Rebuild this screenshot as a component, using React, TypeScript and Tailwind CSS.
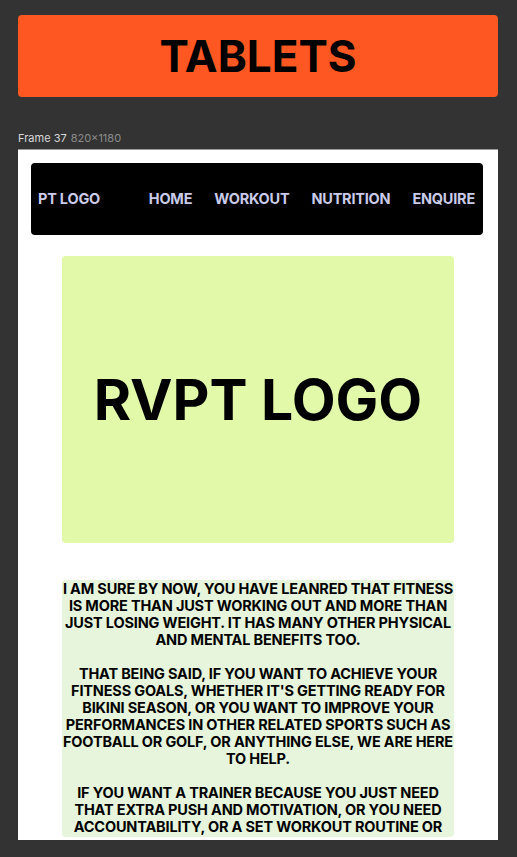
const paragraphs = [
  [
    "I AM SURE BY NOW, YOU HAVE LEANRED THAT FITNESS",
    "IS MORE THAN JUST WORKING OUT AND MORE THAN",
    "JUST LOSING WEIGHT. IT HAS MANY OTHER PHYSICAL",
    "AND MENTAL BENEFITS TOO.",
  ],
  [
    "THAT BEING SAID, IF YOU WANT TO ACHIEVE YOUR",
    "FITNESS GOALS, WHETHER IT'S GETTING READY FOR",
    "BIKINI SEASON, OR YOU WANT TO IMPROVE YOUR",
    "PERFORMANCES IN OTHER RELATED SPORTS SUCH AS",
    "FOOTBALL OR GOLF, OR ANYTHING ELSE, WE ARE HERE",
    "TO HELP.",
  ],
  [
    "IF YOU WANT A TRAINER BECAUSE YOU JUST NEED",
    "THAT EXTRA PUSH AND MOTIVATION, OR YOU NEED",
    "ACCOUNTABILITY, OR A SET WORKOUT ROUTINE OR",
    "PERSONALISED NUTRITION PLAN, WE CAN DO THAT TOO.",
  ],
];

const navLinks = ["HOME", "WORKOUT", "NUTRITION", "ENQUIRE"];

export default function App() {
  return (
    <div className="h-[857px] w-[517px] overflow-hidden bg-[#333333] pl-[18px] pr-[19px] pt-[15px] font-['Inter',sans-serif]">
      {/* Section heading */}
      <div className="flex h-[82px] items-center justify-center rounded-[4px] bg-[#ff5722]">
        <h1 className="text-[44px] font-bold leading-none text-black">TABLETS</h1>
      </div>

      {/* Frame label */}
      <div className="mt-[35px] flex h-[17px] items-start gap-1 text-[11px] leading-[12px]">
        <span className="text-[#d9d9d9]">Frame 37</span>
        <span className="text-[#8c8c8c]">820×1180</span>
      </div>

      {/* Frame */}
      <div className="h-[691px] overflow-hidden border-t border-[#9a9a9a] bg-white pl-[13px] pr-[15px] pt-[13px]">
        <nav className="flex h-[72px] items-center rounded-[4px] bg-black pl-[7px] pr-[8px] text-[14.5px] font-bold tracking-[-0.015em] text-[#c9cbe8]">
          <span>PT LOGO</span>
          <div className="ml-auto flex items-center gap-[22px]">
            {navLinks.map((link) => (
              <a key={link} href="#" className="leading-none">
                {link}
              </a>
            ))}
          </div>
        </nav>

        <div className="ml-[31px] mr-[29px] mt-[21px] flex h-[287px] items-center justify-center rounded-[4px] bg-[#e1f9a8]">
          <span className="text-[57px] font-bold leading-none text-black">RVPT LOGO</span>
        </div>

        <div className="ml-[31px] mr-[29px] mt-[37px] h-[257px] overflow-hidden rounded-[4px] bg-[#e6f5dc]">
          {paragraphs.map((lines, i) => (
            <p
              key={i}
              className="-mx-2 mb-[17px] flex flex-col items-center text-[14.5px] font-bold leading-[17px] tracking-[-0.012em] text-black"
            >
              {lines.map((line) => (
                <span key={line} className="whitespace-nowrap">
                  {line}
                </span>
              ))}
            </p>
          ))}
        </div>
      </div>
    </div>
  );
}
